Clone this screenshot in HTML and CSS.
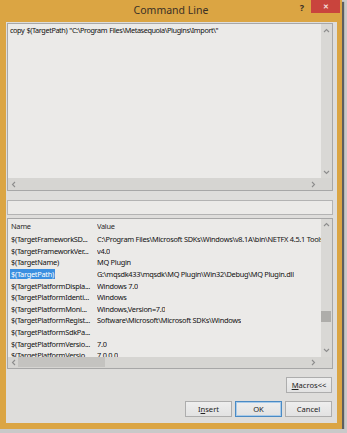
FILE: index.html
```html
<!DOCTYPE html>
<html lang="en">
<head>
  <meta charset="UTF-8">
  <meta name="viewport" content="width=device-width, initial-scale=1.0">
  <title>Command Line</title>
  <link rel="stylesheet" href="styles.css">
</head>
<body>
  <div class="window">
    <div class="titlebar">
      <div></div>
      <div class="title">Command Line</div>
      <div class="controls">
        <span class="help">?</span>
        <span class="close">&#x2715;</span>
      </div>
    </div>

    <div class="client">
      <div class="editor">
        <div class="editor-text">copy $(TargetPath) "C:\Program Files\Metasequoia\Plugins\Import\"</div>
        <div class="vscroll">
          <svg class="arrow" width="7" height="5" viewBox="0 0 7 5"><polyline points="1,4 3.5,1.5 6,4"/></svg>
          <svg class="arrow" width="7" height="5" viewBox="0 0 7 5"><polyline points="1,1 3.5,3.5 6,1"/></svg>
        </div>
        <div class="hscroll">
          <svg class="arrow" width="5" height="7" viewBox="0 0 5 7"><polyline points="4,1 1.5,3.5 4,6"/></svg>
          <svg class="arrow" width="5" height="7" viewBox="0 0 5 7"><polyline points="1,1 3.5,3.5 1,6"/></svg>
        </div>
        <div class="corner"></div>
      </div>

      <input class="filter" type="text">

      <div class="macro-list">
        <div class="table">
          <div class="row head"><span class="name">Name</span><span class="value">Value</span></div>
          <div class="row"><span class="name">$(TargetFrameworkSD...</span><span class="value">C:\Program Files\Microsoft SDKs\Windows\v8.1A\bin\NETFX 4.5.1 Tools\</span></div>
          <div class="row"><span class="name">$(TargetFrameworkVer...</span><span class="value">v4.0</span></div>
          <div class="row"><span class="name">$(TargetName)</span><span class="value">MQ Plugin</span></div>
          <div class="row"><span class="name"><span class="selected">$(TargetPath)</span></span><span class="value">G:\mqsdk433\mqsdk\MQ Plugin\Win32\Debug\MQ Plugin.dll</span></div>
          <div class="row"><span class="name">$(TargetPlatformDispla...</span><span class="value">Windows 7.0</span></div>
          <div class="row"><span class="name">$(TargetPlatformIdenti...</span><span class="value">Windows</span></div>
          <div class="row"><span class="name">$(TargetPlatformMoni...</span><span class="value">Windows,Version=7.0</span></div>
          <div class="row"><span class="name">$(TargetPlatformRegist...</span><span class="value">Software\Microsoft\Microsoft SDKs\Windows</span></div>
          <div class="row"><span class="name">$(TargetPlatformSdkPa...</span><span class="value"></span></div>
          <div class="row"><span class="name">$(TargetPlatformVersio...</span><span class="value">7.0</span></div>
          <div class="row"><span class="name">$(TargetPlatformVersio...</span><span class="value">7.0.0.0</span></div>
        </div>
        <div class="vscroll">
          <svg class="arrow" width="7" height="5" viewBox="0 0 7 5"><polyline points="1,4 3.5,1.5 6,4"/></svg>
          <div class="vthumb"></div>
          <svg class="arrow" width="7" height="5" viewBox="0 0 7 5"><polyline points="1,1 3.5,3.5 6,1"/></svg>
        </div>
        <div class="hscroll">
          <svg class="arrow" width="5" height="7" viewBox="0 0 5 7"><polyline points="4,1 1.5,3.5 4,6"/></svg>
          <div class="hthumb"></div>
          <svg class="arrow" width="5" height="7" viewBox="0 0 5 7"><polyline points="1,1 3.5,3.5 1,6"/></svg>
        </div>
        <div class="corner"></div>
      </div>

      <div class="macros-row">
        <button class="btn"><u>M</u>acros&lt;&lt;</button>
      </div>

      <div class="buttons">
        <button class="btn">I<u>n</u>sert</button>
        <button class="btn default">OK</button>
        <button class="btn">Cancel</button>
      </div>
    </div>
  </div>
</body>
</html>
```

FILE: styles.css
```css
body {
  margin: 0;
  background: #c9c9c9;
  font-family: "Noto Sans", "Open Sans", sans-serif;
  color: #111;
}
.window {
  width: 342px;
  height: 429px;
  background: #dba543;
  display: flex;
  flex-direction: column;
  box-shadow: 2px 2px 1px #5e5e5e;
}
.titlebar {
  height: 22px;
  display: grid;
  grid-template-columns: 1fr auto 1fr;
}
.title {
  font-size: 10.5px;
  line-height: 20px;
  color: #3a3026;
}
.controls {
  display: flex;
  justify-content: flex-end;
  align-items: flex-start;
  padding-right: 2px;
}
.help {
  font-size: 9px;
  font-weight: bold;
  color: #3a3026;
  line-height: 15px;
  margin-right: 7px;
}
.close {
  width: 29px;
  height: 13px;
  background: #c9443d;
  color: #f3dcd9;
  font-size: 7px;
  font-weight: bold;
  line-height: 13px;
  text-align: center;
}
.client {
  flex: 1;
  margin: 0 5px 6px 6px;
  padding: 1px 4px 6px 1px;
  background: #dedddb;
  display: flex;
  flex-direction: column;
}
.editor, .macro-list {
  border: 1px solid #a7a7a7;
  background: #ebeae8;
  display: grid;
  grid-template-columns: 1fr 11px;
  grid-template-rows: 1fr 11px;
}
.editor {
  height: 168px;
  box-sizing: border-box;
  grid-template-rows: 1fr 12px;
}
.editor-text {
  font-size: 7.3px;
  letter-spacing: -0.4px;
  word-spacing: 0.6px;
  padding: 1px 2px;
  line-height: 10px;
  white-space: nowrap;
  overflow: hidden;
}
.vscroll {
  background: #d9d8d5;
  display: flex;
  flex-direction: column;
  justify-content: space-between;
  align-items: center;
  padding: 4px 0 3px;
}
.hscroll {
  background: #d6d5d2;
  display: flex;
  align-items: center;
  justify-content: space-between;
  padding: 0 5px 0 3px;
}
.corner {
  background: #d6d5d2;
}
.arrow polyline {
  fill: none;
  stroke: #8d8d8d;
  stroke-width: 1.1;
}
.filter {
  margin: 9px 0 0;
  height: 15px;
  box-sizing: border-box;
  border: 1px solid #b3b3b3;
  background: #ebeae8;
  padding: 0;
}
.macro-list {
  margin-top: 3px;
  height: 151px;
  box-sizing: border-box;
}
.table {
  overflow: hidden;
  font-size: 7.4px;
  letter-spacing: -0.28px;
}
.row {
  display: flex;
  height: 11.65px;
  line-height: 11.65px;
  white-space: nowrap;
}
.row.head {
  height: 15px;
  line-height: 15px;
  color: #2b2b2b;
}
.name {
  width: 84px;
  padding-left: 3px;
  margin-right: 2px;
  flex-shrink: 0;
  overflow: hidden;
}
.value {
  overflow: hidden;
}
.selected {
  background: #3b8fe0;
  color: #fff;
  padding: 0 1px;
  margin-left: -1px;
  display: inline-block;
  line-height: 10px;
}
.macro-list .vscroll {
  position: relative;
  padding: 3px 0 4px;
}
.vthumb {
  position: absolute;
  left: 0;
  top: 92px;
  width: 10px;
  height: 11px;
  background: #aeadaa;
}
.macro-list .hscroll {
  position: relative;
}
.hthumb {
  position: absolute;
  left: 10px;
  top: 0;
  width: 87px;
  height: 10px;
  background: #c4c3c0;
}
.macros-row {
  margin-top: 8px;
  display: flex;
  justify-content: flex-end;
}
.buttons {
  margin-top: 8px;
  display: flex;
  justify-content: flex-end;
  gap: 3px;
}
.btn {
  height: 16px;
  width: 47px;
  border: 1px solid #adadad;
  background: linear-gradient(#eeeeee, #e2e2e2);
  font-family: inherit;
  font-size: 7.6px;
  color: #222;
  padding: 0;
  margin-right: 1px;
}
.buttons .btn {
  margin-right: 0;
}
.buttons .btn:last-child {
  margin-right: 1px;
}
.macros-row .btn {
  width: 46px;
}
.btn.default {
  border-color: #4a8ac4;
  box-shadow: inset 0 0 0 1px #a9cbe9;
}
```
